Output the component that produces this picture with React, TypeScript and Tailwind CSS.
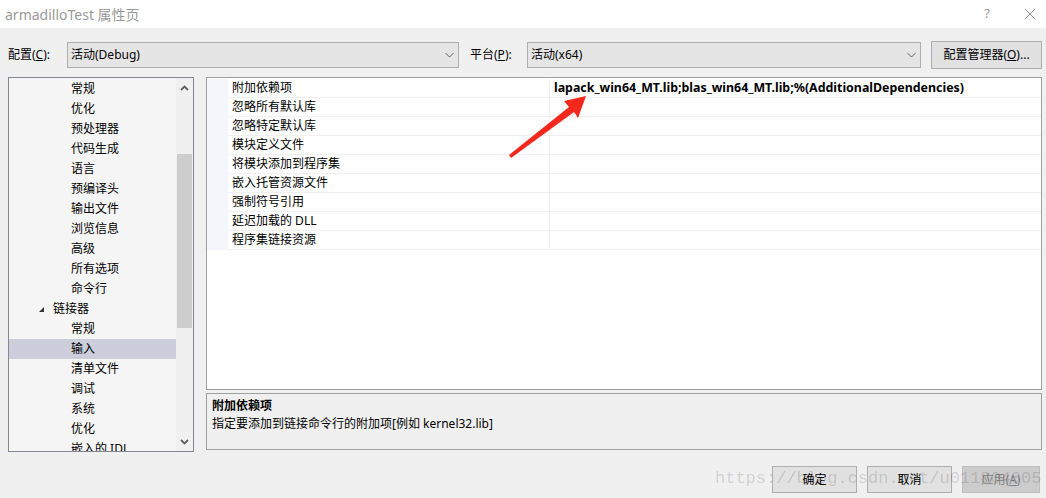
import React from "react";

const FONT = { fontFamily: '"Noto Sans", "Noto Sans CJK SC", sans-serif' };

const treeItems: { label: string; level: number; expanded?: boolean; selected?: boolean }[] = [
  { label: "常规", level: 2 },
  { label: "优化", level: 2 },
  { label: "预处理器", level: 2 },
  { label: "代码生成", level: 2 },
  { label: "语言", level: 2 },
  { label: "预编译头", level: 2 },
  { label: "输出文件", level: 2 },
  { label: "浏览信息", level: 2 },
  { label: "高级", level: 2 },
  { label: "所有选项", level: 2 },
  { label: "命令行", level: 2 },
  { label: "链接器", level: 1, expanded: true },
  { label: "常规", level: 2 },
  { label: "输入", level: 2, selected: true },
  { label: "清单文件", level: 2 },
  { label: "调试", level: 2 },
  { label: "系统", level: 2 },
  { label: "优化", level: 2 },
  { label: "嵌入的 IDL", level: 2 },
];

const props = [
  "附加依赖项",
  "忽略所有默认库",
  "忽略特定默认库",
  "模块定义文件",
  "将模块添加到程序集",
  "嵌入托管资源文件",
  "强制符号引用",
  "延迟加载的 DLL",
  "程序集链接资源",
];

const Chevron: React.FC<{ up?: boolean; className?: string }> = ({ up, className }) => (
  <svg width="9" height="6" viewBox="0 0 9 6" className={className}>
    <path d={up ? "M1 5 L4.5 1.5 L8 5" : "M1 1 L4.5 4.5 L8 1"} fill="none" stroke="currentColor" strokeWidth="1.8" />
  </svg>
);

const ThinChevron = () => (
  <svg width="9" height="6" viewBox="0 0 9 6" className="text-[#606060]">
    <path d="M0.5 1 L4.5 5 L8.5 1" fill="none" stroke="currentColor" strokeWidth="1" />
  </svg>
);

const Select: React.FC<{ value: string; width: string }> = ({ value, width }) => (
  <div className={`${width} h-[26px] border border-[#adadad] bg-[#e5e5e5] flex items-center pl-[3px] pr-[4px] text-[12px] text-black`}>
    <span className="flex-1">{value}</span>
    <ThinChevron />
  </div>
);

export default function App() {
  return (
    <div className="relative w-[1046px] h-[498px] overflow-hidden bg-[#f0f0f0] flex flex-col text-black" style={FONT}>
      {/* title bar */}
      <div className="h-[28px] bg-white flex items-center pl-[5px] shrink-0">
        <span className="flex-1 text-[14px] text-[#999999]">armadilloTest 属性页</span>
        <span className="w-[20px] text-center text-[13px] text-[#999999] mr-[27px]">?</span>
        <svg width="12" height="12" viewBox="0 0 12 12" className="mr-[10px] text-[#999999]">
          <path d="M1 1 L11 11 M11 1 L1 11" stroke="currentColor" strokeWidth="1" />
        </svg>
      </div>

      {/* config row */}
      <div className="mt-[13px] h-[28px] flex items-center pl-[8px] text-[12px] shrink-0">
        <span className="w-[59px]">配置(<u>C</u>):</span>
        <Select value="活动(Debug)" width="w-[392px]" />
        <span className="ml-[11px] w-[57px]">平台(<u>P</u>):</span>
        <Select value="活动(x64)" width="w-[394px]" />
        <div className="ml-[10px] w-[111px] h-[28px] border border-[#adadad] bg-[#e1e1e1] flex items-center justify-center">
          配置管理器(<u>O</u>)...
        </div>
      </div>

      {/* main */}
      <div className="mt-[8px] flex pl-[8px] pr-[4px] shrink-0">
        {/* tree */}
        <div className="w-[186px] h-[375px] border border-[#828790] bg-[#f5f5f5] flex overflow-hidden">
          <div className="flex-1 pt-[1px] overflow-hidden text-[12px]">
            {treeItems.map((it, i) => (
              <div
                key={i}
                className={`h-[20px] flex items-center ${it.selected ? "bg-[#cccedb]" : ""} ${it.level === 2 ? "pl-[62px]" : "pl-[29px]"}`}
              >
                {it.expanded && (
                  <svg width="7" height="7" viewBox="0 0 7 7" className="mr-[8px]">
                    <path d="M6 1 L6 6 L1 6 Z" fill="#333" />
                  </svg>
                )}
                <span className="whitespace-nowrap">{it.label}</span>
              </div>
            ))}
          </div>
          <div className="w-[17px] bg-[#f0f0f0] flex flex-col items-center">
            <div className="h-[19px] flex items-center justify-center text-[#606060]">
              <Chevron up />
            </div>
            <div className="flex-1 w-full px-[1px] pt-[57px] pb-[104px]">
              <div className="w-full h-full bg-[#cdcdcd]" />
            </div>
            <div className="h-[19px] flex items-center justify-center text-[#606060]">
              <Chevron />
            </div>
          </div>
        </div>

        {/* right column */}
        <div className="ml-[12px] flex-1 flex flex-col gap-[3px]">
          <div className="h-[313px] border border-[#a0a0a0] bg-white flex flex-col pt-[1px]">
            {props.map((p, i) => (
              <div key={i} className="h-[19px] flex text-[12px] shrink-0">
                <div className="w-[21px] bg-[#f4f6fb]" />
                <div className="w-[321px] pl-[4px] flex items-center border-b border-[#f0f0f0]">{p}</div>
                <div className="flex-1 pl-[4px] flex items-center border-l border-b border-[#f0f0f0] font-bold whitespace-nowrap text-[12.4px]">
                  {i === 0 ? "lapack_win64_MT.lib;blas_win64_MT.lib;%(AdditionalDependencies)" : ""}
                </div>
              </div>
            ))}
          </div>
          <div className="h-[57px] border border-[#a0a0a0] bg-[#f0f0f0] px-[5px] pt-[3px] text-[12px] leading-[18px]">
            <div className="font-bold">附加依赖项</div>
            <div>指定要添加到链接命令行的附加项[例如 kernel32.lib]</div>
          </div>
        </div>
      </div>

      {/* buttons */}
      <div className="mt-[14px] flex justify-end gap-[10px] pr-[6px] text-[12px]">
        <div className="w-[85px] h-[27px] border border-[#adadad] bg-[#e1e1e1] flex items-center justify-center">确定</div>
        <div className="w-[85px] h-[27px] border border-[#adadad] bg-[#e1e1e1] flex items-center justify-center">取消</div>
        <div className="w-[78px] h-[27px] border border-[#bfbfbf] bg-[#cccccc] flex items-center justify-center text-[#838383]">
          应用(<u>A</u>)
        </div>
      </div>

      {/* watermark */}
      <div
        className="absolute left-[715px] top-[466px] text-[17px] text-black/15 pointer-events-none whitespace-nowrap"
        style={{ fontFamily: '"Liberation Mono", monospace' }}
      >
        https://blog.csdn.net/u011804005
      </div>

      {/* red arrow annotation */}
      <svg className="absolute left-0 top-0 pointer-events-none" width="1046" height="498">
        <polygon points="586,96 578,118 574,112 511,158 509,155 569,107 564,101" fill="#f5281d" />
      </svg>
    </div>
  );
}
